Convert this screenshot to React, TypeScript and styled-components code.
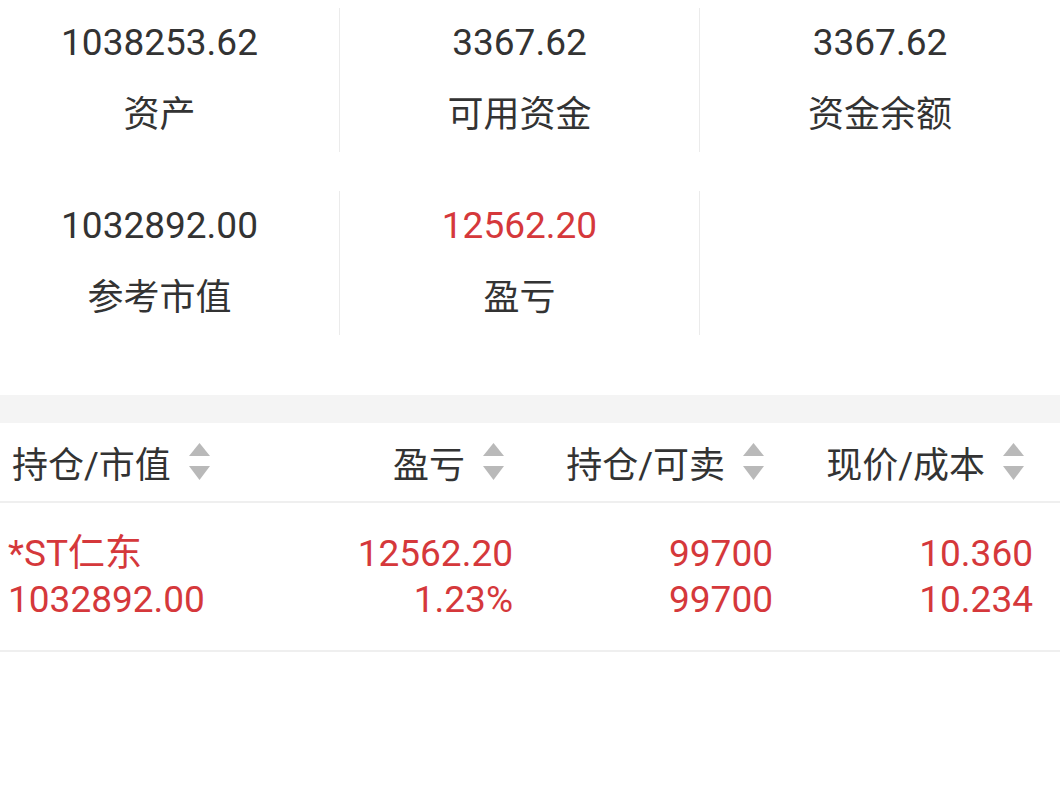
import React from "react";
import styled, { createGlobalStyle } from "styled-components";

const GlobalStyle = createGlobalStyle`
  html, body {
    margin: 0;
    padding: 0;
    background: #ffffff;
    overflow-x: hidden;
  }
  body {
    font-family: Roboto, "Noto Sans CJK SC", sans-serif;
    color: #333333;
  }
`;

const RED = "#d5383b";

const summary = [
  [
    { value: "1038253.62", label: "资产" },
    { value: "3367.62", label: "可用资金" },
    { value: "3367.62", label: "资金余额" },
  ],
  [
    { value: "1032892.00", label: "参考市值" },
    { value: "12562.20", label: "盈亏", red: true },
    null,
  ],
];

const headers = ["持仓/市值", "盈亏", "持仓/可卖", "现价/成本"];

const positions = [
  {
    cells: [
      ["*ST仁东", "1032892.00"],
      ["12562.20", "1.23%"],
      ["99700", "99700"],
      ["10.360", "10.234"],
    ],
  },
];

const SortIcon = () => (
  <SortSvg viewBox="0 0 23 38" width="23" height="38">
    <polygon points="11.5,0 22,13 1,13" fill="#b9b9b9" />
    <polygon points="1,23 22,23 11.5,37" fill="#b9b9b9" />
  </SortSvg>
);

const App = () => {
  return (
    <Page>
      <GlobalStyle />
      <Summary>
        {summary.map((row, ri) =>
          row.map((item, ci) => (
            <SummaryCell key={`${ri}-${ci}`} $last={ci === 2}>
              {item && (
                <>
                  <Amount $red={item.red}>{item.value}</Amount>
                  <Label>{item.label}</Label>
                </>
              )}
            </SummaryCell>
          ))
        )}
      </Summary>
      <Band />
      <HeaderRow>
        {headers.map((h, i) => (
          <HeaderCell key={h} $first={i === 0}>
            <span>{h}</span>
            <SortIcon />
          </HeaderCell>
        ))}
      </HeaderRow>
      {positions.map((p, pi) => (
        <DataRow key={pi}>
          {p.cells.map((c, i) => (
            <DataCell key={i} $first={i === 0}>
              <div>{c[0]}</div>
              <div>{c[1]}</div>
            </DataCell>
          ))}
        </DataRow>
      ))}
    </Page>
  );
};
export default App;

const Page = styled.div`
  width: 1080px;
  margin-left: -20px;
  min-height: 804px;
  background: #ffffff;
`;

const Summary = styled.div`
  display: grid;
  grid-template-columns: repeat(3, 360px);
  grid-auto-rows: 144px;
  row-gap: 39px;
  padding: 8px 0 60px;
`;

const SummaryCell = styled.div<{ $last?: boolean }>`
  display: flex;
  flex-direction: column;
  align-items: center;
  padding-top: 10px;
  gap: 22px;
  border-right: ${(p) => (p.$last ? "none" : "1px solid #ebebeb")};
`;

const Amount = styled.div<{ $red?: boolean }>`
  font-size: 37px;
  line-height: 50px;
  color: ${(p) => (p.$red ? RED : "#333333")};
`;

const Label = styled.div`
  font-size: 36px;
  line-height: 50px;
  color: #333333;
`;

const Band = styled.div`
  height: 28px;
  background: #f4f4f4;
`;

const HeaderRow = styled.div`
  display: grid;
  grid-template-columns: repeat(4, 260px);
  padding-left: 20px;
  height: 80px;
  border-bottom: 2px solid #efefef;
  box-sizing: border-box;
`;

const HeaderCell = styled.div<{ $first?: boolean }>`
  display: flex;
  align-items: center;
  justify-content: ${(p) => (p.$first ? "flex-start" : "flex-end")};
  padding: ${(p) => (p.$first ? "0 0 0 12px" : "0 15px 0 0")};
  gap: 17px;
  font-size: 36px;
  color: #333333;
`;

const SortSvg = styled.svg`
  display: block;
  flex: none;
`;

const DataRow = styled.div`
  display: grid;
  grid-template-columns: repeat(4, 260px);
  padding: 28px 0 27px 20px;
  border-bottom: 2px solid #efefef;
`;

const DataCell = styled.div<{ $first?: boolean }>`
  text-align: ${(p) => (p.$first ? "left" : "right")};
  padding: ${(p) => (p.$first ? "0 0 0 8px" : "0 7px 0 0")};
  font-size: 37px;
  line-height: 46px;
  color: ${RED};
`;
